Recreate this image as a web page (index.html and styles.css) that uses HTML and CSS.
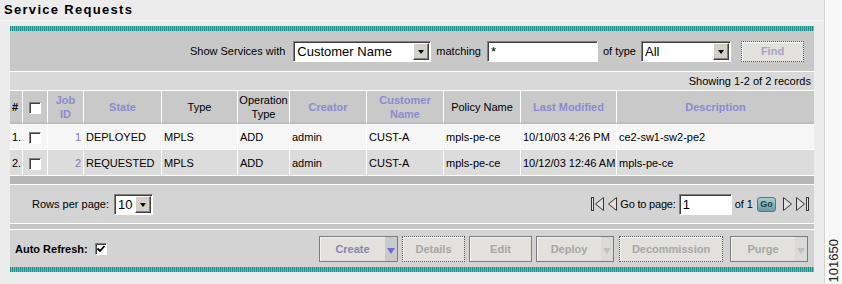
FILE: index.html
```html
<!DOCTYPE html>
<html lang="en">
<head>
    <meta charset="UTF-8">
    <title>Service Requests</title>
    <link rel="stylesheet" href="styles.css">
</head>
<body>
<div class="page">
    <div class="main">
        <h1 class="title">Service Requests</h1>

        <div class="panel">
            <div class="teal-bar"></div>

            <!-- filter -->
            <div class="filter-bar">
                <span class="label">Show Services with</span>
                <span class="combo combo-field">
                    <span class="combo-text">Customer Name</span>
                    <span class="combo-btn"></span>
                </span>
                <span class="label">matching</span>
                <span class="text-input input-match">*</span>
                <span class="label">of type</span>
                <span class="combo combo-type">
                    <span class="combo-text">All</span>
                    <span class="combo-btn"></span>
                </span>
                <span class="btn btn-focus btn-find">Find</span>
            </div>

            <div class="records">Showing 1-2 of 2 records</div>

            <table class="grid">
                <colgroup>
                    <col style="width: 13px">
                    <col style="width: 25px">
                    <col style="width: 36px">
                    <col style="width: 78px">
                    <col style="width: 76px">
                    <col style="width: 52px">
                    <col style="width: 77px">
                    <col style="width: 77px">
                    <col style="width: 77px">
                    <col style="width: 96px">
                    <col style="width: 197px">
                </colgroup>
                <thead>
                    <tr>
                        <th class="col-num">#</th>
                        <th><span class="checkbox"></span></th>
                        <th class="sortable">Job<br>ID</th>
                        <th class="sortable">State</th>
                        <th>Type</th>
                        <th>Operation<br>Type</th>
                        <th class="sortable">Creator</th>
                        <th class="sortable">Customer<br>Name</th>
                        <th>Policy Name</th>
                        <th class="sortable">Last Modified</th>
                        <th class="sortable">Description</th>
                    </tr>
                </thead>
                <tbody>
                    <tr class="row-odd">
                        <td class="col-num">1.</td>
                        <td class="col-check"><span class="checkbox"></span></td>
                        <td class="col-id">1</td>
                        <td>DEPLOYED</td>
                        <td>MPLS</td>
                        <td>ADD</td>
                        <td>admin</td>
                        <td>CUST-A</td>
                        <td>mpls-pe-ce</td>
                        <td>10/10/03 4:26 PM</td>
                        <td>ce2-sw1-sw2-pe2</td>
                    </tr>
                    <tr class="row-even">
                        <td class="col-num">2.</td>
                        <td class="col-check"><span class="checkbox"></span></td>
                        <td class="col-id">2</td>
                        <td>REQUESTED</td>
                        <td>MPLS</td>
                        <td>ADD</td>
                        <td>admin</td>
                        <td>CUST-A</td>
                        <td>mpls-pe-ce</td>
                        <td>10/12/03 12:46 AM</td>
                        <td>mpls-pe-ce</td>
                    </tr>
                </tbody>
            </table>

            <div class="grid-foot"></div>

            <!-- paging -->
            <div class="pager">
                <div class="rows-per-page">
                    <span class="label">Rows per page:</span>
                    <span class="combo combo-rows">
                        <span class="combo-text">10</span>
                        <span class="combo-btn"></span>
                    </span>
                </div>
                <div class="page-nav">
                    <svg class="nav-icon" width="14" height="16" viewBox="0 0 14 16">
                        <rect x="0.5" y="1.5" width="2" height="13" fill="#e8e8e8" stroke="#333"/>
                        <path d="M12.5 1.5 L4.5 8 L12.5 14.5 Z" fill="#e0e0e0" stroke="#333"/>
                    </svg>
                    <svg class="nav-icon" width="10" height="16" viewBox="0 0 10 16">
                        <path d="M8.5 1.5 L0.5 8 L8.5 14.5 Z" fill="#e0e0e0" stroke="#333"/>
                    </svg>
                    <span class="label go-label">Go to page:</span>
                    <span class="text-input input-page">1</span>
                    <span class="label">of 1</span>
                    <span class="go-btn">Go</span>
                    <svg class="nav-icon" width="10" height="16" viewBox="0 0 10 16">
                        <path d="M1.5 1.5 L9.5 8 L1.5 14.5 Z" fill="#e0e0e0" stroke="#333"/>
                    </svg>
                    <svg class="nav-icon" width="14" height="16" viewBox="0 0 14 16">
                        <path d="M1.5 1.5 L9.5 8 L1.5 14.5 Z" fill="#e0e0e0" stroke="#333"/>
                        <rect x="11.5" y="1.5" width="2" height="13" fill="#e8e8e8" stroke="#333"/>
                    </svg>
                </div>
            </div>

            <div class="divider"></div>

            <!-- actions -->
            <div class="actions">
                <div class="auto-refresh">
                    <span class="label-bold">Auto Refresh:</span>
                    <span class="checkbox checked">
                        <svg width="10" height="10" viewBox="0 0 10 10">
                            <path d="M1.5 4.5 L4 7 L8.5 2" fill="none" stroke="#000" stroke-width="1.8"/>
                        </svg>
                    </span>
                </div>
                <div class="buttons">
                    <span class="btn btn-menu btn-create">
                        <span class="btn-text">Create</span>
                        <span class="btn-arrow"></span>
                    </span>
                    <span class="btn btn-focus btn-details">Details</span>
                    <span class="btn btn-edit">Edit</span>
                    <span class="btn btn-menu btn-deploy">
                        <span class="btn-text">Deploy</span>
                        <span class="btn-arrow"></span>
                    </span>
                    <span class="btn btn-focus btn-decom">Decommission</span>
                    <span class="btn btn-menu btn-purge">
                        <span class="btn-text">Purge</span>
                        <span class="btn-arrow"></span>
                    </span>
                </div>
            </div>

            <div class="teal-bar"></div>
        </div>
    </div>

    <div class="gutter">
        <span class="fig-id">101650</span>
    </div>
</div>
</body>
</html>
```

FILE: styles.css
```css
* {
    box-sizing: border-box;
    margin: 0;
    padding: 0;
}

body {
    font-family: "Liberation Sans", Arial, sans-serif;
    font-size: 11px;
    color: #000;
    background: #ececec;
}

.page {
    display: flex;
    width: 842px;
    height: 284px;
    overflow: hidden;
}

.main {
    width: 824px;
}

.title {
    height: 21px;
    padding: 3px 0 0 4px;
    font-size: 13px;
    line-height: 14px;
    font-weight: bold;
    letter-spacing: 1.3px;
    border-bottom: 1px solid #f7f7f7;
    margin-bottom: 5px;
}

.panel {
    margin-left: 10px;
    width: 804px;
    background: #d4d4d4;
}

.teal-bar {
    height: 5px;
    background: repeating-linear-gradient(90deg, #1d8e87 0 1px, #6fbfb7 1px 2px);
}

.label {
    white-space: nowrap;
}

.label-bold {
    font-weight: bold;
    white-space: nowrap;
}

/* filter row */
.filter-bar {
    display: flex;
    align-items: center;
    justify-content: flex-end;
    gap: 5px;
    height: 41px;
    padding-right: 10px;
    background: #c8c8c8;
    border-bottom: 1px solid #fff;
}

.combo {
    display: inline-flex;
    align-items: stretch;
    height: 21px;
    background: #fff;
    border: 1px solid;
    border-color: #808080 #fff #fff #808080;
    box-shadow: inset 1px 1px 0 #404040;
}

.combo-text {
    flex: 1;
    padding: 0 0 0 3px;
    font-size: 13px;
    line-height: 19px;
    white-space: nowrap;
    overflow: hidden;
}

.combo-btn {
    position: relative;
    width: 16px;
    margin: 1px 1px 1px 0;
    background: #d4d0c8;
    border: 1px solid;
    border-color: #fff #404040 #404040 #fff;
    box-shadow: inset -1px -1px 0 #808080;
}

.combo-btn::after {
    content: "";
    position: absolute;
    left: 4px;
    top: 6px;
    border-top: 4px solid #000;
    border-left: 3.5px solid transparent;
    border-right: 3.5px solid transparent;
}

.combo-field {
    width: 138px;
    margin-left: 3px;
}

.combo-type {
    width: 90px;
}

.combo-rows {
    width: 39px;
}

.text-input {
    display: inline-block;
    height: 21px;
    padding-left: 3px;
    background: #fff;
    font-size: 13px;
    line-height: 19px;
    border: 1px solid;
    border-color: #808080 #fff #fff #808080;
    box-shadow: inset 1px 1px 0 #404040;
}

.input-match {
    width: 111px;
    margin-left: 1px;
}

.input-page {
    width: 53px;
}

/* buttons */
.btn {
    display: inline-flex;
    align-items: center;
    justify-content: center;
    height: 26px;
    background: #e2e1dd;
    color: #a6a6a6;
    font-weight: bold;
    border: 1px solid #7c7c7c;
    box-shadow: inset 1px 1px 0 #f4f4f2;
    white-space: nowrap;
}

.btn-focus {
    border: 1px dotted #555;
}

.btn-find {
    width: 63px;
    height: 21px;
    margin-left: 5px;
    color: #a2a2c4;
}

.btn-menu {
    justify-content: stretch;
    align-items: stretch;
}

.btn-text {
    flex: 1;
    display: flex;
    align-items: center;
    justify-content: center;
}

.btn-arrow {
    position: relative;
    width: 12px;
    background: #dadad8;
}

.btn-arrow::after {
    content: "";
    position: absolute;
    left: 2px;
    top: 11px;
    border-top: 6px solid #c0c0c0;
    border-left: 4px solid transparent;
    border-right: 4px solid transparent;
}

.btn-create {
    width: 79px;
    margin-left: 2px;
    color: #8585b5;
}

.btn-create .btn-arrow {
    background: #cacaca;
}

.btn-create .btn-arrow::after {
    border-top-color: #6d6dd4;
}

.btn-details {
    width: 63px;
}

.btn-edit {
    width: 63px;
}

.btn-deploy {
    width: 78px;
}

.btn-decom {
    width: 104px;
    margin-left: 1px;
}

.btn-purge {
    width: 78px;
    margin-left: 3px;
}

/* records / grid */
.records {
    height: 19px;
    padding-right: 3px;
    line-height: 18px;
    text-align: right;
    background: #d9d9d9;
    border-bottom: 1px solid #fff;
}

.grid {
    width: 804px;
    table-layout: fixed;
    border-collapse: separate;
    border-spacing: 0;
}

.grid th,
.grid td {
    border-right: 1px solid #fff;
    white-space: nowrap;
    overflow: hidden;
}

.grid th:last-child,
.grid td:last-child {
    border-right: none;
}

.grid th {
    height: 33px;
    padding: 0 1px;
    font-weight: normal;
    line-height: 14px;
    text-align: center;
    vertical-align: middle;
    background: #c9c9c9;
    border-bottom: 2px solid #bdbdbd;
}

.grid th.sortable {
    color: #8b8bcf;
    font-weight: bold;
}

.grid th.col-num {
    text-align: left;
    padding-left: 2px;
    font-weight: bold;
}

.grid td {
    height: 26px;
    padding: 1px 2px 0;
    vertical-align: middle;
    border-bottom: 1px solid #fff;
}

.row-odd td {
    background: #f6f6f6;
}

.row-even td {
    background: #dcdcdc;
}

.grid td.col-num {
    padding-left: 2px;
}

.grid td.col-check {
    text-align: center;
}

.grid td.col-id {
    text-align: right;
    color: #7a7ab8;
}

.checkbox {
    display: inline-block;
    width: 12px;
    height: 12px;
    vertical-align: middle;
    background: #fff;
    border: 1px solid;
    border-color: #808080 #fff #fff #808080;
    box-shadow: inset 1px 1px 0 #404040;
}

.checkbox.checked svg {
    display: block;
    margin: 0;
}

.grid-foot {
    height: 9px;
    background: #b6b6b6;
    border-bottom: 1px solid #fff;
}

/* pager */
.pager {
    display: flex;
    align-items: center;
    justify-content: space-between;
    height: 39px;
    padding: 0 5px 0 22px;
    background: #d4d4d4;
    border-bottom: 1px solid #fff;
}

.rows-per-page,
.page-nav {
    display: flex;
    align-items: center;
}

.rows-per-page {
    gap: 5px;
}

.page-nav {
    gap: 3px;
}

.nav-icon {
    display: block;
}

.go-label {
    margin-left: -1px;
    letter-spacing: -0.2px;
}

.go-btn {
    display: inline-block;
    width: 19px;
    height: 15px;
    margin: 0 3px 0 1px;
    font-size: 9px;
    font-weight: bold;
    line-height: 13px;
    text-align: center;
    color: #1c3d49;
    background: linear-gradient(#a9cbcf, #6b9ba3);
    border: 1px solid #4f7c84;
    border-radius: 3px;
}

.divider {
    height: 6px;
    background: #c6c6c6;
    border-bottom: 1px solid #fff;
}

/* actions */
.actions {
    display: flex;
    align-items: center;
    justify-content: space-between;
    height: 37px;
    padding: 0 6px 0 5px;
    background: #d3d3d3;
}

.auto-refresh {
    display: flex;
    align-items: center;
    gap: 7px;
}

.buttons {
    display: flex;
    gap: 4px;
}

/* right gutter */
.gutter {
    display: flex;
    flex-direction: column;
    justify-content: flex-end;
    align-items: center;
    width: 18px;
    padding-bottom: 2px;
    background: #f8f8f8;
    border-left: 1px solid #d2d2d2;
    box-shadow: inset 1px 0 0 #fff;
}

.fig-id {
    writing-mode: vertical-rl;
    transform: rotate(180deg);
    font-size: 13px;
    line-height: 13px;
    color: #222;
}
```
